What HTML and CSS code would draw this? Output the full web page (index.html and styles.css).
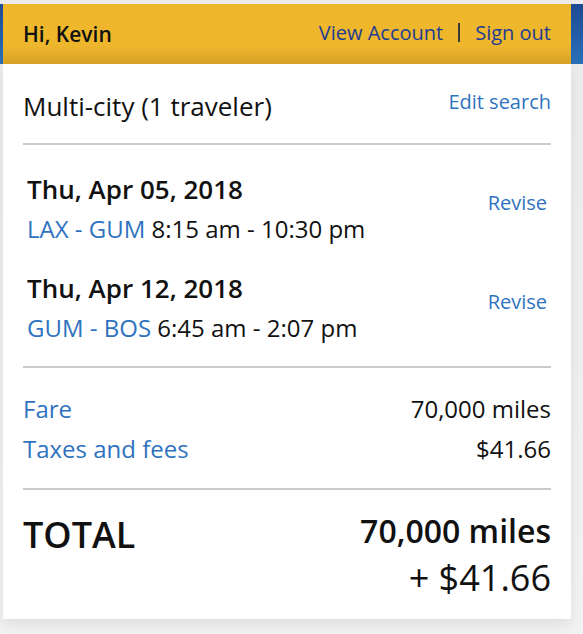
FILE: index.html
```html
<!DOCTYPE html>
<html>
<head>
<meta charset="utf-8">
<link rel="stylesheet" href="styles.css">
</head>
<body>
<div class="page">
  <div class="topband">
    <div class="greet">
      <span class="hi">Hi, Kevin</span>
      <nav class="acct">
        <a class="acct-link">View Account</a>
        <span class="sep"></span>
        <a class="acct-link">Sign out</a>
      </nav>
    </div>
  </div>
  <div class="card">
    <div class="trip-head">
      <span class="trip-type">Multi-city (1 traveler)</span>
      <a class="link small">Edit search</a>
    </div>
    <hr class="rule">
    <div class="flights">
      <div class="flight">
        <div class="flight-info">
          <div class="date">Thu, Apr 05, 2018</div>
          <div class="route"><span class="link">LAX - GUM</span> 8:15 am - 10:30 pm</div>
        </div>
        <a class="link small revise">Revise</a>
      </div>
      <div class="flight">
        <div class="flight-info">
          <div class="date">Thu, Apr 12, 2018</div>
          <div class="route"><span class="link">GUM - BOS</span> 6:45 am - 2:07 pm</div>
        </div>
        <a class="link small revise">Revise</a>
      </div>
    </div>
    <hr class="rule">
    <div class="costs">
      <div class="cost"><span class="link">Fare</span><span>70,000 miles</span></div>
      <div class="cost"><span class="link">Taxes and fees</span><span>$41.66</span></div>
    </div>
    <hr class="rule">
    <div class="total">
      <div class="total-label">TOTAL</div>
      <div class="total-values">
        <div class="total-miles">70,000 miles</div>
        <div class="total-cash">+ $41.66</div>
      </div>
    </div>
  </div>
</div>
</body>
</html>
```
FILE: styles.css
```css
html, body {
  margin: 0;
  padding: 0;
}
body {
  background: linear-gradient(#ebebeb, #f2f2f2);
  font-family: "Open Sans", "Noto Sans", sans-serif;
  color: #111;
  width: 583px;
  height: 634px;
  overflow: hidden;
}
.page {
  padding-top: 4px;
}
.topband {
  height: 60px;
  background: linear-gradient(#1d4a92, #2a70b8);
  padding: 0 12px 0 3px;
}
.greet {
  height: 60px;
  background: linear-gradient(#efb82c 0%, #edb62c 70%, #d7a226 100%);
  display: flex;
  align-items: center;
  justify-content: space-between;
  padding: 0 20px;
  box-sizing: border-box;
}
.hi {
  font-size: 21px;
  font-weight: 600;
  color: #111;
  margin-top: 0;
}
.acct {
  display: flex;
  align-items: center;
  gap: 15px;
  margin-top: -4px;
}
.acct-link {
  font-size: 20px;
  color: #1d3c94;
}
.sep {
  width: 2px;
  height: 19px;
  background: #3a3a3a;
}
.card {
  margin: 0 12px 0 3px;
  background: #fff;
  padding: 26px 20px 14px;
  box-shadow: 0 6px 12px rgba(0, 0, 0, 0.08);
}
.link {
  color: #2f73c0;
}
.small {
  font-size: 20px;
  line-height: 24px;
}
.trip-head {
  display: flex;
  justify-content: space-between;
  align-items: flex-start;
}
.trip-type {
  font-size: 26px;
  line-height: 32px;
}
.rule {
  border: 0;
  height: 2px;
  background: #cbcbcb;
  margin: 21px 0 0;
}
.flights {
  padding: 24px 4px 0;
  display: flex;
  flex-direction: column;
  gap: 19px;
}
.flight {
  display: flex;
  justify-content: space-between;
  align-items: flex-start;
}
.date {
  font-size: 26px;
  font-weight: 600;
  line-height: 40px;
}
.route {
  font-size: 24px;
  line-height: 40px;
}
.revise {
  padding-top: 22px;
}
.flights + .rule {
  margin-top: 18px;
}
.costs {
  padding-top: 21px;
}
.cost {
  display: flex;
  justify-content: space-between;
  font-size: 24px;
  line-height: 40px;
}
.costs + .rule {
  margin-top: 19px;
}
.total {
  display: flex;
  justify-content: space-between;
  align-items: flex-start;
  padding-top: 21px;
}
.total-label {
  font-size: 36px;
  font-weight: 600;
  line-height: 48px;
}
.total-values {
  text-align: right;
}
.total-miles {
  font-size: 32px;
  font-weight: 600;
  line-height: 40px;
}
.total-cash {
  font-size: 36px;
  line-height: 54px;
}
```
